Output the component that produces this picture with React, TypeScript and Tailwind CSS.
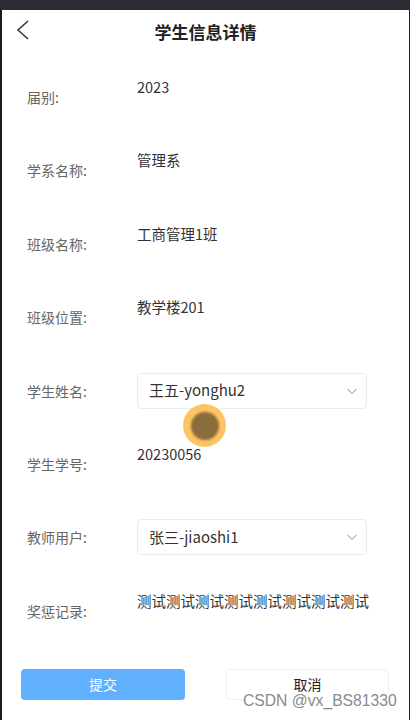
import React from "react";

const font = { fontFamily: '"Noto Sans CJK SC", "Noto Sans", sans-serif' };

function Chevron() {
  return (
    <svg width="12" height="12" viewBox="0 0 12 12" fill="none" className="text-[#b5b5bd]">
      <polyline points="1.5,4 6,8.5 10.5,4" stroke="currentColor" strokeWidth="1.1" fill="none" />
    </svg>
  );
}

type Row = { label: string; value: string; select?: boolean };

const rows: Row[] = [
  { label: "届别:", value: "2023" },
  { label: "学系名称:", value: "管理系" },
  { label: "班级名称:", value: "工商管理1班" },
  { label: "班级位置:", value: "教学楼201" },
  { label: "学生姓名:", value: "王五-yonghu2", select: true },
  { label: "学生学号:", value: "20230056" },
  { label: "教师用户:", value: "张三-jiaoshi1", select: true },
  { label: "奖惩记录:", value: "测试测试测试测试测试测试测试测试" },
];

export default function App() {
  return (
    <div className="relative w-[410px] h-[720px] overflow-hidden bg-white" style={font}>
      <div className="h-[10px] bg-[#2b2b33]" />
      <div className="relative h-[710px] border-l-2 border-r border-[#1a1a1a] bg-white flex flex-col">
        <div className="relative h-[45px] flex items-center justify-center">
          <svg className="absolute left-[14px] top-[10px]" width="14" height="20" viewBox="0 0 14 20" fill="none">
            <polyline points="12,1 2,10 12,19" stroke="#3a3a3a" strokeWidth="1.6" fill="none" />
          </svg>
          <div className="text-[17px] font-bold text-[#222] mt-[-1px]">学生信息详情</div>
        </div>
        <div className="flex flex-col gap-[37.4px] mt-[24px]">
          {rows.map((r) => (
            <div key={r.label} className="flex h-9">
              <div className="w-[135px] shrink-0 pl-[25px] flex items-center text-[14px] text-[#666] pt-[1px]">{r.label}</div>
              {r.select ? (
                <div className="w-[230px] h-9 border border-[#ececec] rounded-[4px] flex items-center justify-between pl-[11px] pr-[8px] text-[15px] text-[#333]">
                  <span>{r.value}</span>
                  <Chevron />
                </div>
              ) : (
                <div className="text-[14.5px] leading-[18px] text-[#333] -mt-[1px] whitespace-nowrap">{r.value}</div>
              )}
            </div>
          ))}
        </div>
        <div className="flex mt-[40px] pl-[19px] gap-[41px]">
          <div className="w-[164px] h-[31px] rounded-[4px] bg-[#60b0fd] flex items-center justify-center text-[14px] text-white">提交</div>
          <div className="w-[163px] h-[31px] rounded-[4px] border border-[#eeeeee] flex items-center justify-center text-[14px] text-[#222]">取消</div>
        </div>
      </div>
      <div
        className="absolute left-[243px] top-[692px] bg-white text-[15.7px] leading-[18px] text-[#8a8a8a] pr-[3px]"
        style={{ fontFamily: '"Liberation Sans", Arial, sans-serif' }}
      >
        CSDN @vx_BS81330
      </div>
      <div className="absolute left-[183px] top-[404px] w-[43px] h-[43px] rounded-full bg-[#fcc462] flex items-center justify-center">
        <div className="w-[28px] h-[28px] rounded-full bg-[#8b6c3c] blur-[1px]" />
      </div>
    </div>
  );
}
